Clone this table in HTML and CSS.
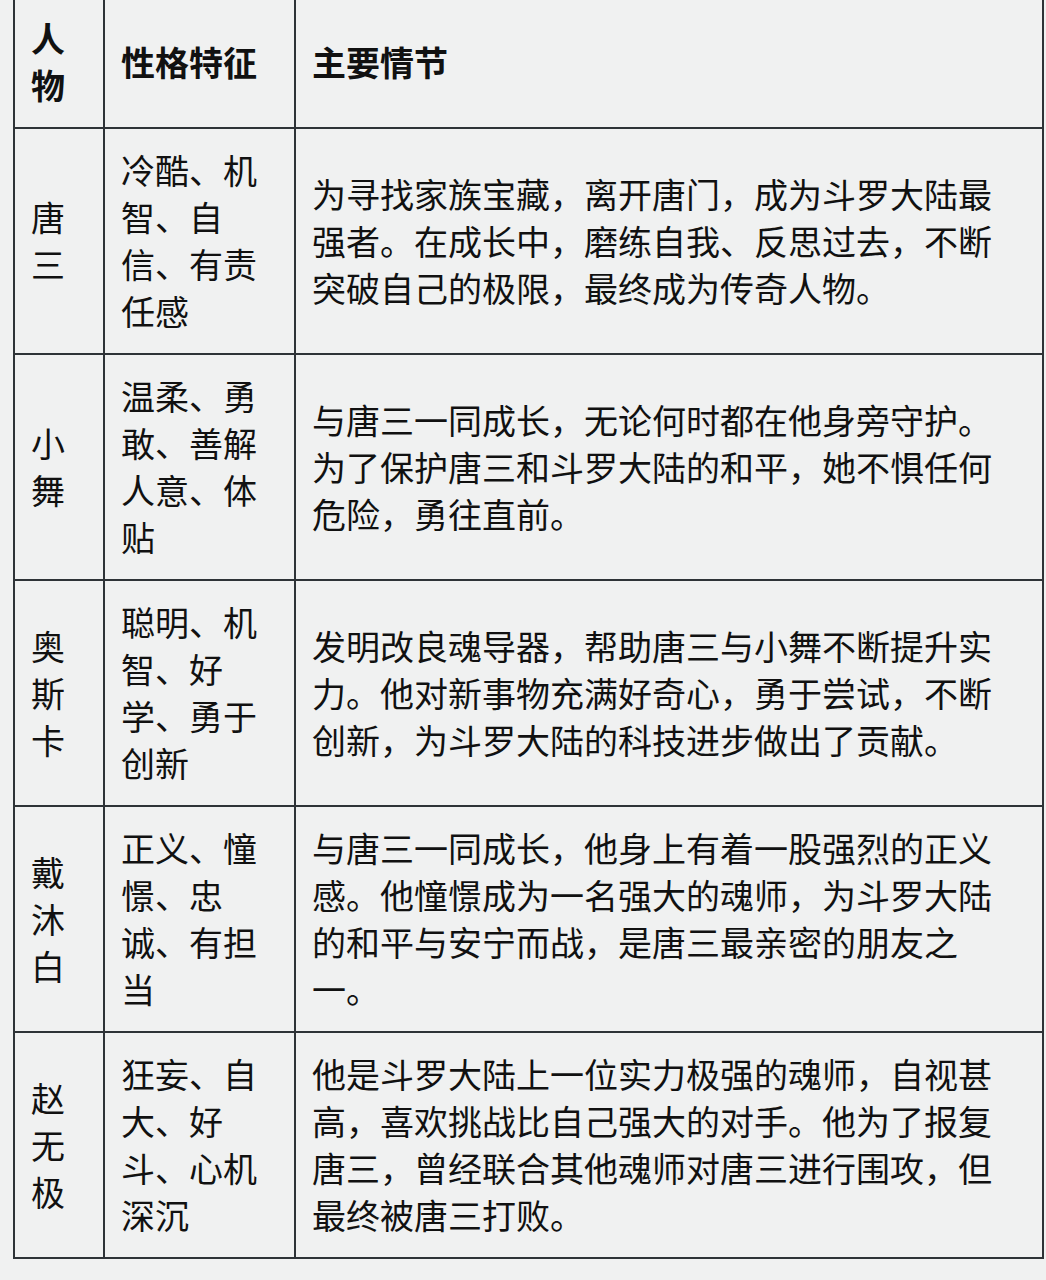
FILE: index.html
```html
<!DOCTYPE html>
<html lang="zh">
<head>
<meta charset="utf-8">
<link rel="stylesheet" href="styles.css">
</head>
<body>
<table class="roles">
  <colgroup>
    <col class="c1"><col class="c2"><col class="c3">
  </colgroup>
  <thead>
    <tr><th>人物</th><th>性格特征</th><th>主要情节</th></tr>
  </thead>
  <tbody>
    <tr><td>唐三</td><td>冷酷、机智、自信、有责任感</td><td>为寻找家族宝藏，离开唐门，成为斗罗大陆最强者。在成长中，磨练自我、反思过去，不断突破自己的极限，最终成为传奇人物。</td></tr>
    <tr><td>小舞</td><td>温柔、勇敢、善解人意、体贴</td><td>与唐三一同成长，无论何时都在他身旁守护。为了保护唐三和斗罗大陆的和平，她不惧任何危险，勇往直前。</td></tr>
    <tr><td>奥斯卡</td><td>聪明、机智、好学、勇于创新</td><td>发明改良魂导器，帮助唐三与小舞不断提升实力。他对新事物充满好奇心，勇于尝试，不断创新，为斗罗大陆的科技进步做出了贡献。</td></tr>
    <tr><td>戴沐白</td><td>正义、憧憬、忠诚、有担当</td><td>与唐三一同成长，他身上有着一股强烈的正义感。他憧憬成为一名强大的魂师，为斗罗大陆的和平与安宁而战，是唐三最亲密的朋友之一。</td></tr>
    <tr><td>赵无极</td><td>狂妄、自大、好斗、心机深沉</td><td>他是斗罗大陆上一位实力极强的魂师，自视甚高，喜欢挑战比自己强大的对手。他为了报复唐三，曾经联合其他魂师对唐三进行围攻，但最终被唐三打败。</td></tr>
  </tbody>
</table>
</body>
</html>
```
FILE: styles.css
```css
html, body {
  background: #f0f1f1;
}
body {
  margin: 0;
  padding: 0;
  overflow: hidden;
}
.roles {
  margin: -5px 0 0 13px;
  width: 1029px;
  table-layout: fixed;
  border-collapse: collapse;
  font-family: "Noto Sans CJK SC", "Noto Sans", sans-serif;
  font-size: 34px;
  line-height: 47px;
  color: #111;
}
.c1 { width: 90px; }
.c2 { width: 191px; }
.c3 { width: 748px; }
.roles th, .roles td {
  border: 2px solid #2e3337;
  padding: 17px 18px 19px 16px;
  vertical-align: middle;
  text-align: left;
  word-break: break-all;
}
.roles th {
  font-weight: 700;
}
.roles td {
  font-weight: 400;
}
```
